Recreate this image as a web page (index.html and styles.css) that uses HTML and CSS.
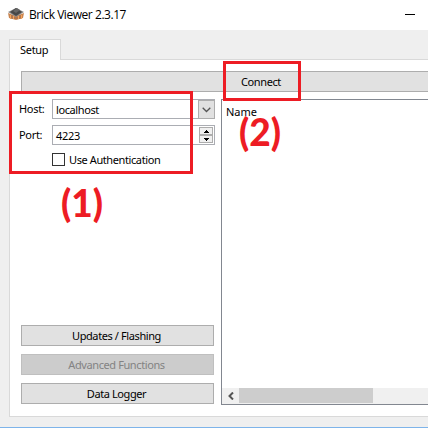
FILE: index.html
```html
<!DOCTYPE html>
<html lang="en">
<head>
<meta charset="utf-8">
<title>Brick Viewer 2.3.17</title>
<link rel="stylesheet" href="styles.css">
</head>
<body>
<div class="window">
  <header class="titlebar">
    <svg class="logo" width="16" height="14" viewBox="0 0 16 14">
      <path fill="#c98550" d="M0 6l8 3 8-3-1 5-7 2-7-2z"/>
      <path fill="#888" d="M0 5l8-4 8 4-8 5z"/>
      <path fill="#484848" d="M2 5l6-4 6 4-6 4z"/>
      <path fill="#666" d="M5 4l4-3 3 2-4 3z"/>
      <path stroke="#f4a45c" d="M2.500 8v4M5.500 9v3M10.500 9v3M13.500 8v4"/>
      <path stroke="#9b6a4c" d="M4 8v4M7 10v2M9 10v2M12 8v4"/>
    </svg>
    <h1 class="title"><span>Brick Viewer 2.3.17</span></h1>
    <svg class="minimize" width="10" height="1"><path fill="#000" d="M0 0h10v1H0z"/></svg>
  </header>
  <nav class="tabs"><div class="tab">Setup</div></nav>
  <main class="panel">
    <button class="button connect"><span>Connect</span></button>
    <div class="columns">
      <section class="settings">
        <div class="row host"><label>Host:</label>
          <div class="field"><span class="hostname">localhost</span>
            <div class="drop"><svg width="9" height="6" viewBox="0 0 9 6"><path d="M.7.7l3.800 3.800L8.300.7" fill="none" stroke="#555" stroke-width="1.300"/></svg></div>
          </div>
        </div>
        <div class="row port"><label>Port:</label>
          <div class="field"><span>4223</span>
            <div class="spin">
              <div class="step"><svg width="5" height="3"><path d="M2 0h1v1h1v1h1v1H0V2h1V1h1z"/></svg></div>
              <div class="step"><svg width="5" height="3"><path d="M0 0h5v1H4v1H3v1H2V2H1V1H0z"/></svg></div>
            </div>
          </div>
        </div>
        <div class="auth"><i class="check"></i><span class="authtext">Use Authentication</span></div>
        <div class="actions">
          <button class="button"><span>Updates / Flashing</span></button>
          <button class="button disabled"><span>Advanced Functions</span></button>
          <button class="button"><span>Data Logger</span></button>
        </div>
      </section>
      <section class="tree">
        <div class="name">Name</div>
        <div class="scrollbar">
          <div class="arrow"><svg width="6" height="8" viewBox="0 0 6 8"><path d="M5 .5L1.500 4 5 7.500" fill="none" stroke="#555" stroke-width="2"/></svg></div>
          <div class="thumb"></div>
        </div>
      </section>
    </div>
  </main>
  <div class="mark mark-one"></div>
  <div class="mark mark-two"></div>
  <div class="number number-one">(1)</div>
  <div class="number number-two">(2)</div>
</div>
</body>
</html>
```
FILE: styles.css
```css
* { box-sizing: border-box; }
body { margin: 0; font: 11px/14px "Noto Sans", sans-serif; color: #000; }
svg { display: block; }
.window { position: relative; width: 428px; height: 428px; overflow: hidden; background: #efefef; border-bottom: 1px solid #7eb4ea; }
.titlebar { display: flex; height: 30px; background: #fff; padding-left: 8px; }
.logo { margin-top: 7px; }
.title { flex: 1; margin: 0; padding: 6px 0 0 5px; font: 12px/17px "Open Sans", sans-serif; letter-spacing: -.45px; white-space: nowrap; }
.minimize { margin: 14px 13px 0 0; }
.tabs { padding: 9px 0 0 9px; height: 29px; }
.tab { position: relative; z-index: 1; width: 52px; height: 21px; background: #fff; border: 1px solid #d9d9d9; border-bottom: 0; padding: 3px 0 0 10px; letter-spacing: -.3px; }
.panel { width: 440px; height: 358px; margin-left: 9px; background: #fff; border: 1px solid #d9d9d9; padding: 11px 0 0 11px; }
.button { display: block; width: 193px; height: 21px; margin: 0; padding: 0 2px 0 0; border: 1px solid #adadad; background: #e1e1e1; color: #000; font: inherit; letter-spacing: -.4px; text-align: center; white-space: nowrap; }
.connect { width: 480px; padding-right: 0; }
.columns { display: flex; gap: 7px; padding-top: 7px; }
.settings { width: 193px; height: 306px; flex: none; display: flex; flex-direction: column; }
.row { display: flex; width: 194px; height: 26px; align-items: flex-start; }
.row label { flex: none; width: 31px; padding-top: 3px; margin-left: -2px; margin-right: 2px; letter-spacing: -.3px; }
.field { flex: 1; height: 20px; display: flex; justify-content: space-between; border: 1px solid #abadb3; padding-left: 3px; line-height: 20px; }
.hostname { letter-spacing: -.4px; }
.port span { letter-spacing: -.3px; }
.drop { width: 17px; height: 19px; margin-right: -1px; display: grid; place-items: center; border: 1px solid #adadad; background: #e1e1e1; }
.spin { width: 15px; padding-top: 1px; display: flex; flex-direction: column; }
.step { height: 8px; width: 14px; border: 1px solid #adadad; background: #f0f0f0; display: grid; place-items: center; }
.auth { display: flex; padding: 2px 0 0 31px; }
.check { width: 13px; height: 13px; border: 1px solid #333; margin-right: 4px; }
.authtext { white-space: nowrap; letter-spacing: -.4px; }
.actions { margin-top: auto; display: flex; flex-direction: column; gap: 8px; padding-bottom: 1px; }
.disabled { background: #ccc; border-color: #bfbfbf; color: #838383; }
.tree { width: 230px; height: 306px; border: 1px solid #828790; display: flex; flex-direction: column; justify-content: space-between; }
.name { padding: 5px 0 0 4px; }
.scrollbar { display: flex; height: 16px; background: #f0f0f0; }
.arrow { width: 17px; display: grid; place-items: center; }
.thumb { width: 134px; height: 15px; background: #cdcdcd; }
.mark { position: absolute; border: 3px solid #ed1c24; }
.mark-one { left: 9px; top: 91px; width: 184px; height: 83px; }
.mark-two { left: 223px; top: 61px; width: 78px; height: 40px; }
.number { position: absolute; font: 900 37px/40px Lato, sans-serif; color: #ed1c24; }
.number-one { left: 61px; top: 183px; }
.number-two { left: 239px; top: 112px; }
```
